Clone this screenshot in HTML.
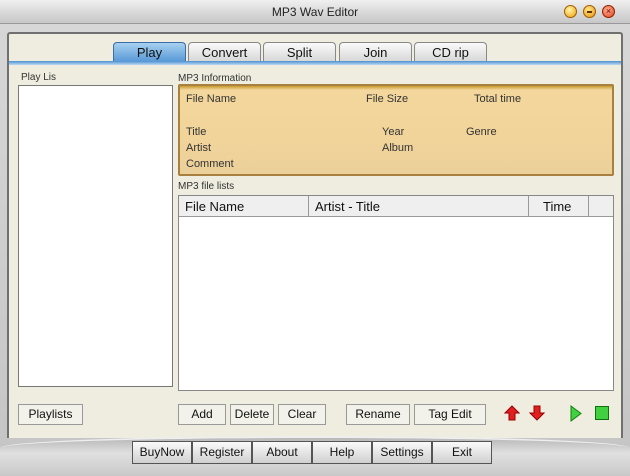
<!DOCTYPE html>
<html><head><meta charset="utf-8"><style>
*{box-sizing:border-box;margin:0;padding:0}
body{width:630px;height:476px;overflow:hidden;font-family:"Liberation Sans",sans-serif;background:linear-gradient(#d8d8d8,#c4c4c4);position:relative}
.abs{position:absolute}
.title{left:0;top:0;width:630px;height:24px;background:linear-gradient(#f0f0f0,#d6d6d6 60%,#c8c8c8);border-bottom:1px solid #999;text-align:center;font-size:12px;line-height:24px;color:#222}
.circ{width:13px;height:13px;border-radius:50%;top:5px;border:1px solid #a05a00}
.panel{left:7px;top:32px;width:616px;height:406px;background:#eeeddf;border:2px solid #707070;border-bottom:none;border-radius:3px 3px 0 0}
.tab{top:42px;height:19px;border:1px solid #888;border-bottom:none;border-radius:4px 4px 0 0;background:linear-gradient(#fafafa,#d8d8d8);font-size:13px;text-align:center;line-height:19px;color:#111}
.lbl{font-size:10px;color:#333}
.box{background:#fff;border:1px solid #888}
.btn{height:21px;border:1px solid #999;background:#f2f2ea;font-size:12px;text-align:center;line-height:19px;color:#111}
.bb{top:441px;height:23px;border:1px solid #555;background:linear-gradient(#fafafa,#d0d0d0);font-size:12px;text-align:center;line-height:21px;color:#111}
.g{font-size:11px;color:#333}
</style></head><body>
<div class="abs title">MP3 Wav Editor</div>
<div class="abs circ" style="left:564px;background:radial-gradient(circle at 40% 35%,#fff6b0,#f0a000)"></div>
<div class="abs circ" style="left:583px;background:radial-gradient(circle at 40% 35%,#ffe890,#e89000)"><div style="position:absolute;left:3px;top:5px;width:5px;height:2px;background:#603000"></div></div>
<div class="abs circ" style="left:602px;background:radial-gradient(circle at 40% 35%,#ffb090,#e04020);border-color:#902000;color:#600;font-size:9px;line-height:11px;text-align:center">×</div>
<div class="abs panel"></div>
<div class="abs tab" style="left:113px;width:73px;background:linear-gradient(#a8d0f0,#5a9ad8);border-color:#3b6ea8">Play</div>
<div class="abs tab" style="left:188px;width:73px">Convert</div>
<div class="abs tab" style="left:263px;width:73px">Split</div>
<div class="abs tab" style="left:339px;width:73px">Join</div>
<div class="abs tab" style="left:414px;width:73px">CD rip</div>
<div class="abs" style="left:9px;top:61px;width:612px;height:4px;background:linear-gradient(#4c90d0,#bcdaf2)"></div>
<div class="abs lbl" style="left:21px;top:72px">Play Lis</div>
<div class="abs box" style="left:18px;top:85px;width:155px;height:302px;border-color:#777"></div>
<div class="abs lbl" style="left:178px;top:73px">MP3 Information</div>
<div class="abs" style="left:178px;top:84px;width:436px;height:92px;background:linear-gradient(#c89a30 0,#f3d79c 4px,#f0d49a 60%,#ecd09a);border:2px solid #a88040;border-radius:2px"></div>
<div class="abs g" style="left:186px;top:93px">File Name</div>
<div class="abs g" style="left:366px;top:93px">File Size</div>
<div class="abs g" style="left:474px;top:93px">Total time</div>
<div class="abs g" style="left:186px;top:126px">Title</div>
<div class="abs g" style="left:382px;top:126px">Year</div>
<div class="abs g" style="left:466px;top:126px">Genre</div>
<div class="abs g" style="left:186px;top:142px">Artist</div>
<div class="abs g" style="left:382px;top:142px">Album</div>
<div class="abs g" style="left:186px;top:158px">Comment</div>
<div class="abs lbl" style="left:178px;top:181px">MP3 file lists</div>
<div class="abs box" style="left:178px;top:195px;width:436px;height:196px;border-color:#888"></div>
<div class="abs" style="left:179px;top:196px;width:434px;height:21px;background:#efefef;border-bottom:1px solid #999;font-size:13px;line-height:21px;color:#111">
<span class="abs" style="left:6px">File Name</span>
<span class="abs" style="left:129px;top:0;height:20px;border-left:1px solid #999"></span>
<span class="abs" style="left:136px">Artist - Title</span>
<span class="abs" style="left:349px;top:0;height:20px;border-left:1px solid #999"></span>
<span class="abs" style="left:364px">Time</span>
<span class="abs" style="left:409px;top:0;height:20px;border-left:1px solid #999"></span>
</div>
<div class="abs btn" style="left:18px;top:404px;width:65px">Playlists</div>
<div class="abs btn" style="left:178px;top:404px;width:48px">Add</div>
<div class="abs btn" style="left:230px;top:404px;width:44px">Delete</div>
<div class="abs btn" style="left:278px;top:404px;width:48px">Clear</div>
<div class="abs btn" style="left:346px;top:404px;width:64px">Rename</div>
<div class="abs btn" style="left:414px;top:404px;width:72px">Tag Edit</div>
<svg class="abs" style="left:504px;top:405px" width="16" height="16"><path d="M8 1 L15 8 L11 8 L11 15 L5 15 L5 8 L1 8 Z" fill="#e02020" stroke="#900" stroke-width="1"/></svg>
<svg class="abs" style="left:529px;top:405px" width="16" height="16"><path d="M8 15 L15 8 L11 8 L11 1 L5 1 L5 8 L1 8 Z" fill="#e02020" stroke="#900" stroke-width="1"/></svg>
<svg class="abs" style="left:570px;top:405px" width="12" height="17"><path d="M1 1 L11 8.5 L1 16 Z" fill="#40d040" stroke="#108010"/></svg>
<svg class="abs" style="left:595px;top:406px" width="15" height="15"><rect x="0.5" y="0.5" width="13" height="13" fill="#40d040" stroke="#107010"/></svg>
<div class="abs" style="left:0;top:436px;width:630px;height:40px;background:linear-gradient(#b8b8b8,#e0e0e0 40%,#c8c8c8);border-radius:50% 50% 0 0/12px 12px 0 0;border-top:2px solid #eee"></div>
<div class="abs bb" style="left:132px;width:60px">BuyNow</div>
<div class="abs bb" style="left:192px;width:60px">Register</div>
<div class="abs bb" style="left:252px;width:60px">About</div>
<div class="abs bb" style="left:312px;width:60px">Help</div>
<div class="abs bb" style="left:372px;width:60px">Settings</div>
<div class="abs bb" style="left:432px;width:60px">Exit</div>
</body></html>
